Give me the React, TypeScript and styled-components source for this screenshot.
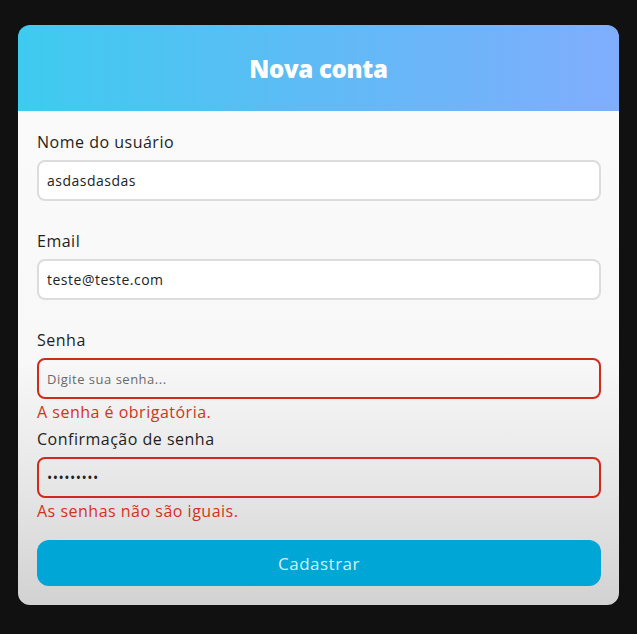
import React from "react";
import styled, { createGlobalStyle } from "styled-components";

const GlobalStyle = createGlobalStyle`
  html, body {
    margin: 0;
    padding: 0;
    background: #111111;
  }
  body {
    font-family: "Open Sans", "Noto Sans", sans-serif;
  }
  * {
    box-sizing: border-box;
  }
`;

type FieldProps = {
  label: string;
  value?: string;
  placeholder?: string;
  type?: string;
  error?: string;
};

const Field: React.FC<FieldProps> = ({ label, value, placeholder, type, error }) => (
  <FieldWrap>
    <Label>{label}</Label>
    <Input
      type={type || "text"}
      defaultValue={value}
      placeholder={placeholder}
      $invalid={!!error}
    />
    <ErrorSlot>{error}</ErrorSlot>
  </FieldWrap>
);

export default function App() {
  return (
    <>
      <GlobalStyle />
      <Page>
        <Card>
          <Header>
            <Title>Nova conta</Title>
          </Header>
          <Form onSubmit={(e) => e.preventDefault()}>
            <Field label="Nome do usuário" value="asdasdasdas" />
            <Field label="Email" value="teste@teste.com" />
            <Field
              label="Senha"
              type="password"
              placeholder="Digite sua senha..."
              error="A senha é obrigatória."
            />
            <Field
              label="Confirmação de senha"
              type="password"
              value="123456789"
              error="As senhas não são iguais."
            />
            <SubmitButton type="submit">Cadastrar</SubmitButton>
          </Form>
        </Card>
      </Page>
    </>
  );
}

const Page = styled.div`
  min-height: 634px;
  padding: 25px 18px 30px 18px;
`;

const Card = styled.div`
  width: 601px;
  border-radius: 12px;
  overflow: hidden;
`;

const Header = styled.div`
  height: 86px;
  display: flex;
  align-items: center;
  justify-content: center;
  background: linear-gradient(90deg, #3ecbef 0%, #5cbcf5 45%, #80adfd 100%);
`;

const Title = styled.h1`
  margin: 0;
  color: #ffffff;
  font-size: 24px;
  font-weight: 800;
  letter-spacing: -0.3px;
`;

const Form = styled.form`
  display: flex;
  flex-direction: column;
  padding: 19px 18px 19px 19px;
  background: linear-gradient(
    180deg,
    #fafafa 0%,
    #f8f8f8 50%,
    #e7e7e7 75%,
    #d2d2d2 100%
  );
`;

const FieldWrap = styled.div`
  display: flex;
  flex-direction: column;
`;

const Label = styled.label`
  font-size: 16px;
  line-height: 24px;
  letter-spacing: 0.5px;
  color: #1e1e1e;
  margin-bottom: 6px;
`;

const Input = styled.input<{ $invalid?: boolean }>`
  height: 41px;
  width: 100%;
  padding: 0 8px;
  border: 2px solid ${(p) => (p.$invalid ? "#d02a1b" : "#dcdcdc")};
  border-radius: 8px;
  background: ${(p) => (p.$invalid ? "transparent" : "#ffffff")};
  font-family: inherit;
  font-size: 14px;
  letter-spacing: 0.5px;
  color: #222;
  outline: none;

  &::placeholder {
    font-size: 13px;
    color: #6a6a6a;
  }
`;

const ErrorSlot = styled.div`
  min-height: 28px;
  padding-top: 2px;
  font-size: 16px;
  line-height: 22px;
  letter-spacing: 0.5px;
  color: #d2331f;
`;

const SubmitButton = styled.button`
  margin-top: 14px;
  height: 46px;
  width: 100%;
  border: none;
  border-radius: 12px;
  background: #00a6d6;
  color: #d5eef7;
  font-family: inherit;
  font-size: 17px;
  letter-spacing: 0.5px;
  cursor: pointer;
`;
